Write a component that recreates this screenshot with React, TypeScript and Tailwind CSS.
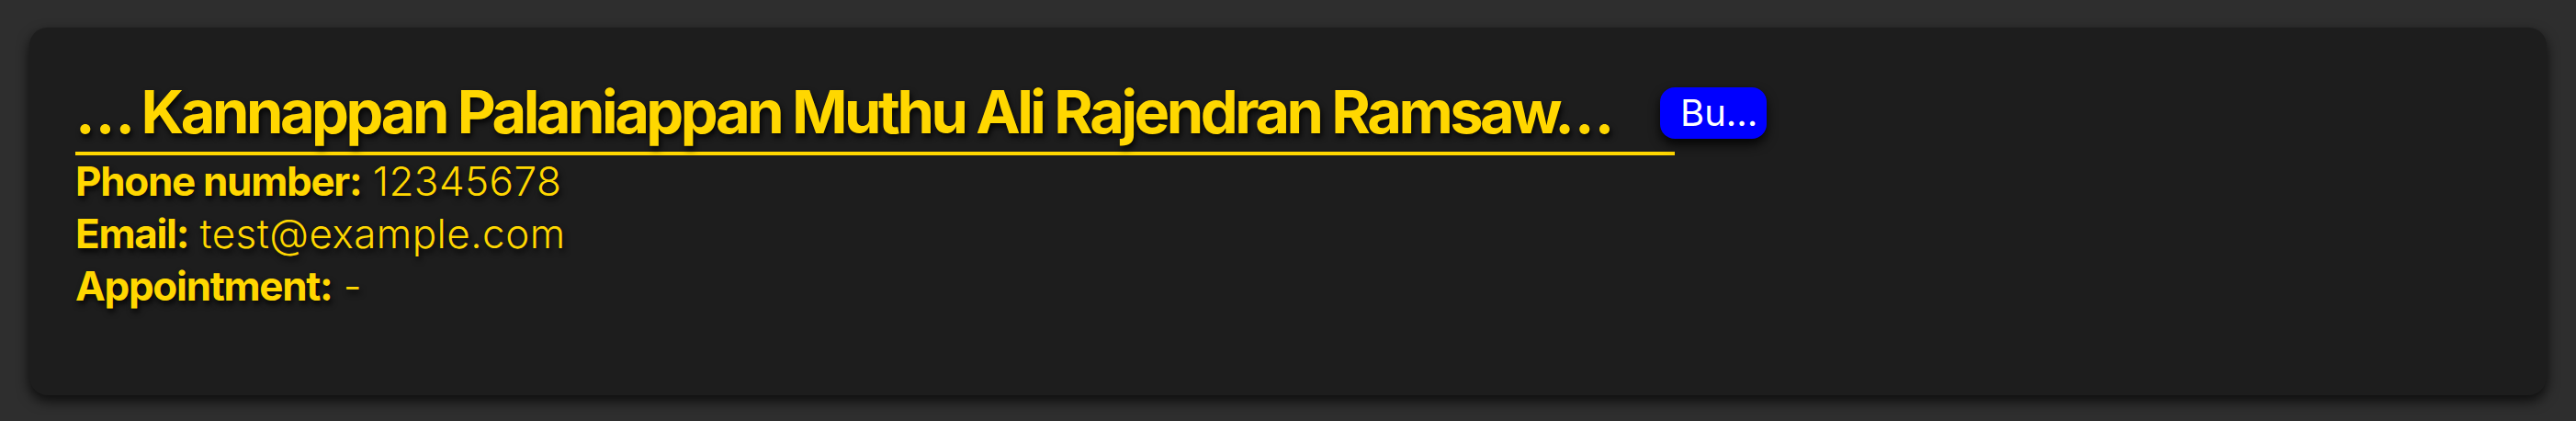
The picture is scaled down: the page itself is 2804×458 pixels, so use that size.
const contact = {
  name: '… Kannappan Palaniappan Muthu Ali Rajendran Ramsaw…',
  phone: '12345678',
  email: 'test@example.com',
  appointment: '-',
};

const textShadow = '[text-shadow:2px_4px_6px_rgba(0,0,0,0.85)]';

function InfoRow({ label, value }: { label: string; value: string }) {
  return (
    <p className={`text-[44px] leading-[57px] text-[#ffd700] ${textShadow}`}>
      <span className="font-bold tracking-[-0.03em]">{label}:</span>{' '}
      <span className="font-light tracking-[0.01em]">{value}</span>
    </p>
  );
}

export default function App() {
  return (
    <div className="min-h-[458px] bg-[#2e2e2e] px-8 pt-[30px] font-['Inter','Liberation_Sans',sans-serif]">
      <div className="h-[400px] rounded-[20px] bg-[#1d1d1d] pl-[50px] pt-[58px] shadow-[0_6px_14px_rgba(0,0,0,0.75)]">
        <div className="flex items-start">
          <h2
            className={`w-[1741px] whitespace-nowrap border-b-4 border-[#ffd700] pb-[9px] text-[65px] font-bold leading-[68px] tracking-[-0.054em] text-[#ffd700] ${textShadow}`}
          >
            {contact.name}
          </h2>
          <button
            type="button"
            className="-ml-4 mt-[7px] h-14 w-[116px] rounded-2xl bg-[#0000ff] pl-[22px] text-left text-[40px] leading-none text-white shadow-[0_6px_12px_rgba(0,0,0,0.85)]"
          >
            Bu…
          </button>
        </div>
        <InfoRow label="Phone number" value={contact.phone} />
        <InfoRow label="Email" value={contact.email} />
        <InfoRow label="Appointment" value={contact.appointment} />
      </div>
    </div>
  );
}
